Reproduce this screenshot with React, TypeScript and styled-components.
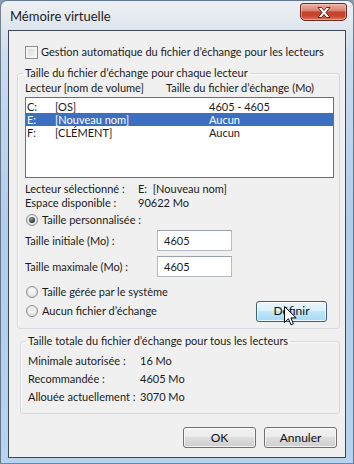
import styled, { createGlobalStyle } from "styled-components"

const FONT = `Lato, "Noto Sans", "DejaVu Sans", sans-serif`

const GlobalStyle = createGlobalStyle`
    html, body { margin: 0; padding: 0; }
    body { width: 354px; height: 464px; overflow: hidden; background: #8d9cab; font-family: ${FONT}; }
`

const Window = styled.div`
    box-sizing: border-box;
    width: 354px;
    height: 464px;
    display: flex;
    flex-direction: column;
    padding: 0 7px 5px 7px;
    border: 1px solid rgba(40, 60, 80, 0.6);
    border-radius: 7px 7px 0 0;
    background: linear-gradient(180deg, #eef1f4 0px, #e2e8ee 22px, #c9dbee 60px, #b2cdea 220px, #b8d3f0 100%);
`

const TitleBar = styled.div`
    height: 29px;
    display: flex;
    justify-content: space-between;
    align-items: flex-start;
`

const Title = styled.span`
    margin: 8px 0 0 2px;
    font: 13px/15px ${FONT};
    color: #1b1b1b;
`

const CloseButton = styled.div`
    box-sizing: border-box;
    width: 47px;
    height: 18px;
    margin: 2px -1px 0 0;
    display: flex;
    align-items: center;
    justify-content: center;
    border: 1px solid #6a2b22;
    border-radius: 3px 3px 5px 5px;
    background: linear-gradient(180deg, #eab1a4 0%, #dc8474 40%, #c5432e 52%, #c8442d 75%, #dd7a5d 100%);
    box-shadow: inset 0 0 0 1px rgba(255, 220, 210, 0.45);
`

const Client = styled.div`
    flex: 1;
    display: flex;
    flex-direction: column;
    padding: 0 5px 0 8px;
    background: #f0f0f0;
    border: 1px solid #3e4853;
    font: 11px/14px ${FONT};
    color: #1a1a1a;
`

const CheckRow = styled.label`
    margin: 14px 0 0 8px;
    height: 14px;
    display: flex;
    align-items: center;
    gap: 3px;
    white-space: nowrap;
`

const CheckBox = styled.span`
    box-sizing: border-box;
    width: 13px;
    height: 13px;
    flex: none;
    border: 1px solid #8e8f8f;
    background: linear-gradient(135deg, #d9d9d9 0%, #f6f6f6 100%);
    box-shadow: inset 0 0 0 2px #f4f4f4;
`

const Group = styled.fieldset<{ $indent?: number; $padRight?: number }>`
    box-sizing: border-box;
    min-width: 0;
    margin: 0 0 0 ${({ $indent }) => $indent || 0}px;
    padding: 0 ${({ $padRight }) => $padRight ?? 7}px 7px 7px;
    border: 1px solid #d3d9de;
    border-radius: 3px;
    box-shadow: inset 1px 1px 0 #fbfbfb;
`

const Legend = styled.legend`
    margin-left: -2px;
    padding: 0 2px;
    font: 11px/14px ${FONT};
    color: #1a1a1a;
    white-space: nowrap;
`

const Columns = styled.div<{ $first: number; $height?: number }>`
    display: grid;
    grid-template-columns: ${({ $first }) => $first}px 1fr;
    align-items: center;
    height: ${({ $height }) => $height || 14}px;
    white-space: nowrap;
`

const ListBox = styled.div`
    box-sizing: border-box;
    height: 81px;
    margin-top: 2px;
    padding-top: 2px;
    background: #fff;
    border: 1px solid #6e6e6e;
`

const ListRow = styled.div<{ $selected?: boolean }>`
    display: grid;
    grid-template-columns: 28px 154px 1fr;
    height: 13px;
    line-height: 13px;
    padding-left: 1px;
    white-space: nowrap;
    background: ${({ $selected }) => ($selected ? "#3d6fc0" : "transparent")};
    color: ${({ $selected }) => ($selected ? "#fff" : "#1a1a1a")};
`

const RadioRow = styled.label<{ $top: number }>`
    margin-top: ${({ $top }) => $top}px;
    height: 14px;
    display: flex;
    align-items: center;
    gap: 4px;
    padding-left: 1px;
    white-space: nowrap;
`

const Radio = styled.span<{ $on?: boolean }>`
    position: relative;
    box-sizing: border-box;
    width: 12px;
    height: 12px;
    flex: none;
    border-radius: 50%;
    border: 1px solid #8b8b8b;
    background: radial-gradient(circle at 50% 40%, #fdfdfd 0%, #e4e4e4 65%, #cdcdcd 100%);
    &::after {
        content: "";
        display: ${({ $on }) => ($on ? "block" : "none")};
        position: absolute;
        left: 2px;
        top: 2px;
        width: 6px;
        height: 6px;
        border-radius: 50%;
        background: radial-gradient(circle at 40% 35%, #8c9ca9 0%, #26313a 70%);
    }
`

const FieldRow = styled.div<{ $top: number }>`
    margin-top: ${({ $top }) => $top}px;
    display: grid;
    grid-template-columns: 132px 75px;
    align-items: center;
    height: 21px;
    white-space: nowrap;
`

const TextBox = styled.div`
    box-sizing: border-box;
    height: 21px;
    padding: 3px 0 0 6px;
    background: #fff;
    border: 1px solid #b5bcc6;
    border-top-color: #9aa1ab;
`

const SplitRow = styled.div`
    margin-top: 2px;
    height: 20px;
    display: flex;
    align-items: center;
    justify-content: space-between;
    padding-right: 7px;
`

const Button = styled.div<{ $hover?: boolean; $width?: number }>`
    position: relative;
    box-sizing: border-box;
    width: ${({ $width }) => $width || 73}px;
    height: 21px;
    display: flex;
    align-items: center;
    justify-content: center;
    border: 1px solid ${({ $hover }) => ($hover ? "#3c5f80" : "#707070")};
    border-radius: 3px;
    background: ${({ $hover }) =>
        $hover
            ? "linear-gradient(180deg, #eaf6fd 0%, #d9f0fc 48%, #bee6fd 50%, #a7d9f5 100%)"
            : "linear-gradient(180deg, #f2f2f2 0%, #ebebeb 48%, #dddddd 50%, #cfcfcf 100%)"};
    box-shadow: inset 0 0 0 1px rgba(255, 255, 255, 0.75);
    color: #111;
    font-size: 12px;
`

const Pointer = styled.svg`
    position: absolute;
    left: 27px;
    top: 4px;
`

const StatRow = styled(Columns)`
    line-height: 18px;
`

const ButtonBar = styled.div`
    margin: 13px 3px 0 0;
    display: flex;
    justify-content: flex-end;
    gap: 8px;
`

const drives = [
    { letter: "C:", name: "[OS]", size: "4605 - 4605" },
    { letter: "E:", name: "[Nouveau nom]", size: "Aucun", selected: true },
    { letter: "F:", name: "[CLÉMENT]", size: "Aucun" },
]

const totals = [
    ["Minimale autorisée :", "16 Mo"],
    ["Recommandée :", "4605 Mo"],
    ["Allouée actuellement :", "3070 Mo"],
]

export default function App() {
    return (
        <>
            <GlobalStyle />
            <Window>
                <TitleBar>
                    <Title>Mémoire virtuelle</Title>
                    <CloseButton>
                        <svg width="14" height="11" viewBox="0 0 14 11">
                            <path d="M1 0.5h3.6L7 3.4 9.4 0.5H13L8.9 5.4 13 10.5H9.4L7 7.5 4.6 10.5H1L5.1 5.4Z" fill="#fff" stroke="#4d1a12" strokeWidth="0.9" />
                        </svg>
                    </CloseButton>
                </TitleBar>

                <Client>
                    <CheckRow>
                        <CheckBox />
                        Gestion automatique du fichier d’échange pour les lecteurs
                    </CheckRow>

                    <Group style={{ marginTop: 7 }} $padRight={5}>
                        <Legend>Taille du fichier d’échange pour chaque lecteur</Legend>
                        <Columns $first={141} style={{ marginTop: 1 }}>
                            <span>Lecteur [nom de volume]</span>
                            <span>Taille du fichier d’échange (Mo)</span>
                        </Columns>
                        <ListBox>
                            {drives.map(d => (
                                <ListRow key={d.letter} $selected={d.selected}>
                                    <span>{d.letter}</span>
                                    <span>{d.name}</span>
                                    <span>{d.size}</span>
                                </ListRow>
                            ))}
                        </ListBox>
                        <Columns $first={113} style={{ marginTop: 4 }}>
                            <span>Lecteur sélectionné :</span>
                            <span>E:&nbsp;&nbsp;[Nouveau nom]</span>
                        </Columns>
                        <Columns $first={113}>
                            <span>Espace disponible :</span>
                            <span>90622 Mo</span>
                        </Columns>
                        <RadioRow $top={3}>
                            <Radio $on />
                            Taille personnalisée :
                        </RadioRow>
                        <FieldRow $top={3}>
                            <span>Taille initiale (Mo) :</span>
                            <TextBox>4605</TextBox>
                        </FieldRow>
                        <FieldRow $top={5}>
                            <span>Taille maximale (Mo) :</span>
                            <TextBox>4605</TextBox>
                        </FieldRow>
                        <RadioRow $top={8}>
                            <Radio />
                            Taille gérée par le système
                        </RadioRow>
                        <SplitRow>
                            <RadioRow $top={0}>
                                <Radio />
                                Aucun fichier d’échange
                            </RadioRow>
                            <Button $hover $width={71}>
                                Définir
                                <Pointer width="13" height="20" viewBox="0 0 13 20">
                                    <path d="M0.5 0.5V16.5L4.4 12.8L7 18.8L9.4 17.8L6.9 11.9H12.2Z" fill="#fff" stroke="#000" strokeWidth="1" strokeLinejoin="round" />
                                </Pointer>
                            </Button>
                        </SplitRow>
                    </Group>

                    <Group style={{ marginTop: 5 }} $indent={3} $padRight={7}>
                        <Legend>Taille totale du fichier d’échange pour tous les lecteurs</Legend>
                        <div style={{ marginTop: 4 }}>
                            {totals.map(([label, value]) => (
                                <StatRow key={label} $first={112} $height={18}>
                                    <span>{label}</span>
                                    <span>{value}</span>
                                </StatRow>
                            ))}
                        </div>
                    </Group>

                    <ButtonBar>
                        <Button>OK</Button>
                        <Button>Annuler</Button>
                    </ButtonBar>
                </Client>
            </Window>
        </>
    )
}
